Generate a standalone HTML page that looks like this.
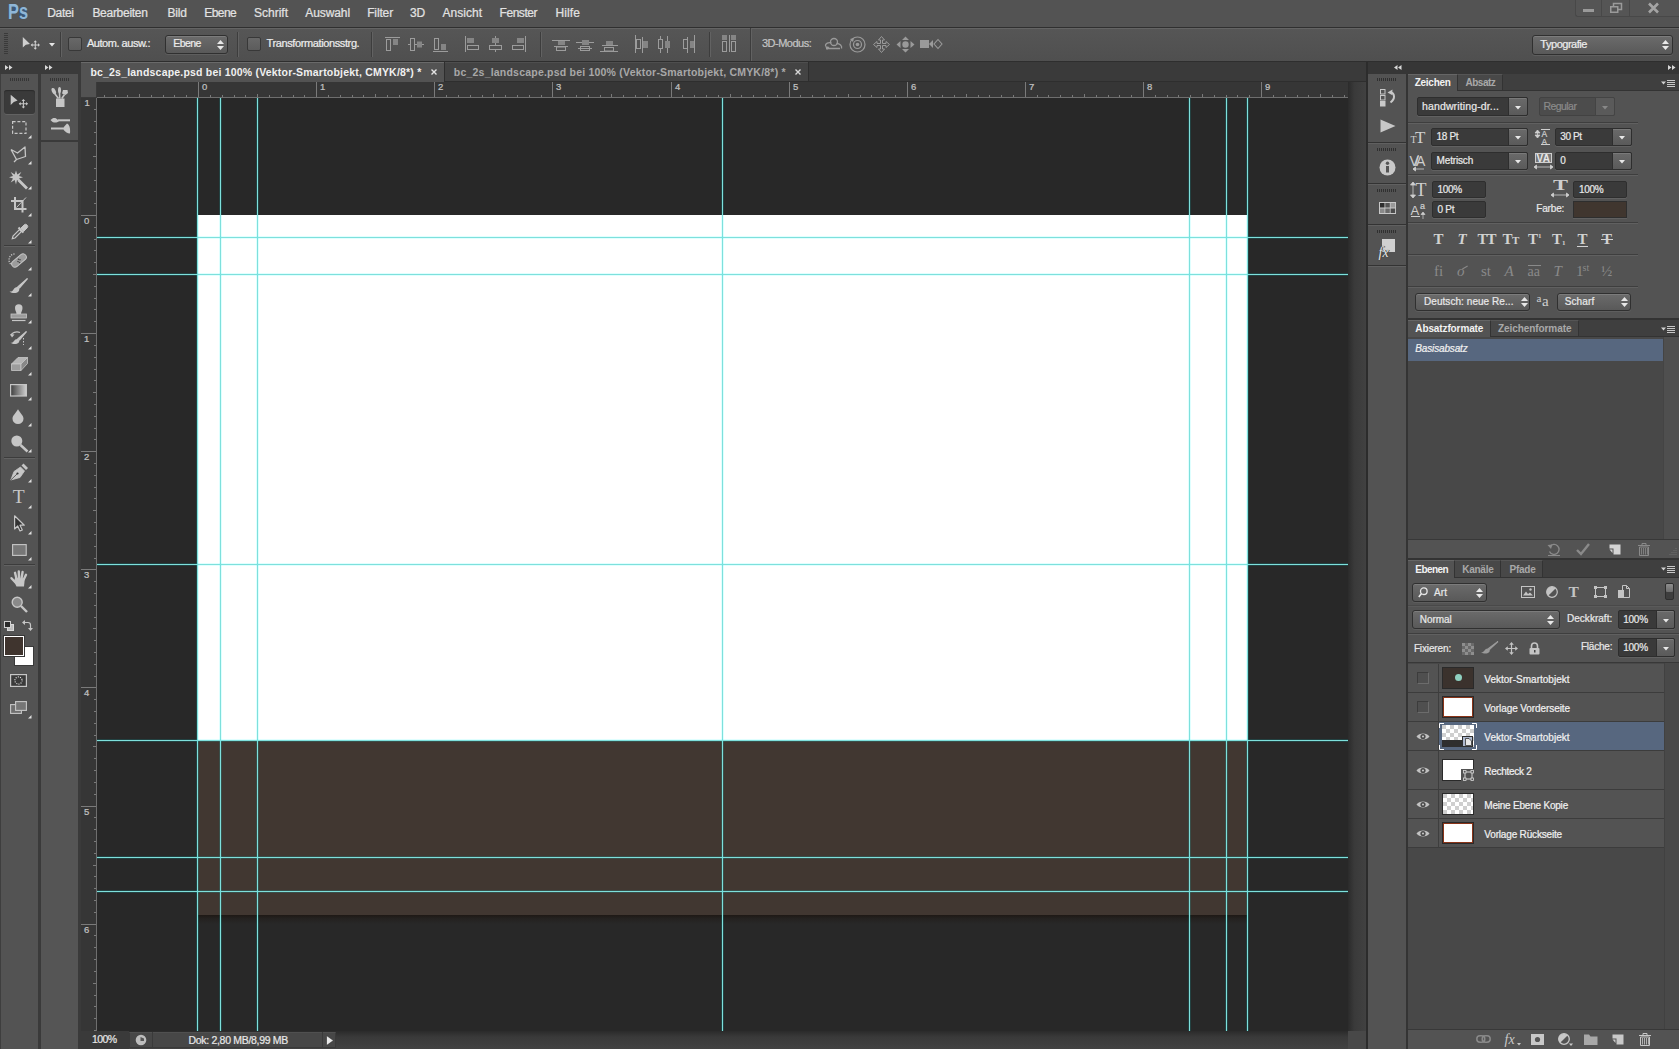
<!DOCTYPE html>
<html><head><meta charset="utf-8">
<style>
*{box-sizing:border-box;margin:0;padding:0}
html,body{width:1679px;height:1049px;overflow:hidden;background:#535353}
body{font-family:"Liberation Sans",sans-serif;font-size:11px;color:#e6e6e6;position:relative}
.a{position:absolute}
.t{position:absolute;white-space:nowrap;line-height:1}
svg{position:absolute;overflow:visible}
/* ---------- top bars ---------- */
#menubar{left:0;top:0;width:1679px;height:27px;background:#535353}
#menuline{left:0;top:27px;width:1679px;height:1px;background:#303030}
#optbar{left:0;top:28px;width:1679px;height:34px;background:linear-gradient(#565656,#4f4f4f)}
#optline{left:0;top:61px;width:1679px;height:1px;background:#2e2e2e}
.m{top:7px;font-size:12px;color:#e4e4e4}
/* ---------- left tools ---------- */
#lhead{left:0;top:62px;width:81px;height:12px;background:#3a3a3a}
#tb1{left:0;top:74px;width:38px;height:975px;background:#535353}
#tbgap{left:38px;top:74px;width:3px;height:975px;background:#3a3a3a}
#tb2{left:41px;top:74px;width:37px;height:975px;background:#555555}
#tb2top{left:41px;top:74px;width:37px;height:66px;background:#535353}
#tbgap2{left:78px;top:62px;width:3px;height:987px;background:#3a3a3a}
/* ---------- document ---------- */
#tabbar{left:81px;top:62px;width:1285px;height:20px;background:#3a3a3a}
#tab1{left:81px;top:62px;width:365px;height:20px;background:#535353}
#hruler{left:81px;top:82px;width:1267px;height:16px;background:#363636}
#vruler{left:81px;top:98px;width:16px;height:933px;background:#363636}
#corner{left:81px;top:82px;width:16px;height:16px;background:#535353}
#canvas{left:97px;top:98px;width:1251px;height:933px;background:#282828;overflow:hidden}
#white{left:101px;top:117px;width:1049px;height:526px;background:#fff}
#brown{left:101px;top:643px;width:1049px;height:174px;background:#413731}
#bshadow{left:101px;top:817px;width:1049px;height:9px;background:linear-gradient(rgba(24,14,8,.6),rgba(24,14,8,.25) 40%,rgba(24,14,8,0))}
.gv{position:absolute;top:0;width:1px;height:933px;background:#7ee0dc;box-shadow:0 0 0 1px rgba(0,255,255,.12)}
.gh{position:absolute;left:0;height:1px;width:1252px;background:#7ee0dc;box-shadow:0 0 0 1px rgba(0,255,255,.12)}
#vscroll{left:1348px;top:82px;width:18px;height:949px;background:linear-gradient(90deg,#2b2b2b 0,#3a3a3a 35%,#414141 100%)}
#hscroll{left:81px;top:1031px;width:1285px;height:18px;background:linear-gradient(#2b2b2b 0,#3a3a3a 35%,#424242 100%)}
#docline{left:1366px;top:62px;width:2px;height:987px;background:#2c2c2c}
/* ---------- right dock ---------- */
#rhead{left:1368px;top:62px;width:311px;height:12px;background:#363636}
#icol{left:1368px;top:74px;width:38px;height:975px;background:#535353}
#igap{left:1406px;top:74px;width:2px;height:975px;background:#343434}
#panels{left:1408px;top:74px;width:271px;height:975px;background:#535353}
</style></head>
<body>
<div id="menubar" class="a"></div>
<div id="menuline" class="a"></div>
<div id="optbar" class="a"></div>
<div id="optline" class="a"></div>
<span class="t" style="left:47.3px;top:6.84px;font-size:12px;color:#e2e2e2;-webkit-text-stroke:.22px;letter-spacing:-0.343px;">Datei</span>
<span class="t" style="left:92.4px;top:6.84px;font-size:12px;color:#e2e2e2;-webkit-text-stroke:.22px;letter-spacing:-0.285px;">Bearbeiten</span>
<span class="t" style="left:167.4px;top:6.84px;font-size:12px;color:#e2e2e2;-webkit-text-stroke:.22px;letter-spacing:-0.179px;">Bild</span>
<span class="t" style="left:204.2px;top:6.84px;font-size:12px;color:#e2e2e2;-webkit-text-stroke:.22px;letter-spacing:-0.541px;">Ebene</span>
<span class="t" style="left:254px;top:6.84px;font-size:12px;color:#e2e2e2;-webkit-text-stroke:.22px;letter-spacing:-0.002px;">Schrift</span>
<span class="t" style="left:305.3px;top:6.84px;font-size:12px;color:#e2e2e2;-webkit-text-stroke:.22px;letter-spacing:-0.094px;">Auswahl</span>
<span class="t" style="left:367.2px;top:6.84px;font-size:12px;color:#e2e2e2;-webkit-text-stroke:.22px;letter-spacing:-0.145px;">Filter</span>
<span class="t" style="left:410px;top:6.84px;font-size:12px;color:#e2e2e2;-webkit-text-stroke:.22px;letter-spacing:-0.072px;">3D</span>
<span class="t" style="left:442.5px;top:6.84px;font-size:12px;color:#e2e2e2;-webkit-text-stroke:.22px;letter-spacing:0.020px;">Ansicht</span>
<span class="t" style="left:499.6px;top:6.84px;font-size:12px;color:#e2e2e2;-webkit-text-stroke:.22px;letter-spacing:-0.470px;">Fenster</span>
<span class="t" style="left:555.5px;top:6.84px;font-size:12px;color:#e2e2e2;-webkit-text-stroke:.22px;letter-spacing:0.077px;">Hilfe</span>
<div class="a" style="left:10px;top:5px;width:7px;height:8px;background:#3d5878;border-radius:1px"></div>
<div class="a" style="left:19px;top:8px;width:8px;height:11px;background:#3a5676;border-radius:2px"></div>
<span class="t" style="left:7.5px;top:-0.00px;font-size:22.8px;color:#8fb6d6;font-weight:bold;transform:scaleX(0.72);transform-origin:0 0;text-shadow:0 0 1px #3a5a7a;">Ps</span>
<div class="a" style="left:0px;top:28px;width:1679px;height:1px;background:#646464"></div>
<div class="a" style="left:4px;top:33px;width:4px;height:22px;background:repeating-linear-gradient(#3a3a3a 0 1px,transparent 1px 2px)"></div>
<svg style="left:22px;top:36px;" width="19" height="15" viewBox="0 0 19 15"><path d="M0.800 1 V11.500 L3.800 8.800 L8 8 Z" fill="#cfcfcf"/><path d="M13.300 5.500 v7 M9.800 9 h7" stroke="#d0d0d0" stroke-width="1" fill="none"/><path d="M13.300 4.300 l-1.700 2 h3.400z M13.300 13.700 l-1.700 -2 h3.400z M8.600 9 l2 -1.700 v3.400z M18 9 l-2 -1.700 v3.400z" fill="#d0d0d0"/></svg>
<svg style="left:49px;top:43px;" width="6" height="4" viewBox="0 0 6 4"><path d="M0 0 L6 0 L3 3.5Z" fill="#e6e6e6"/></svg>
<div class="a" style="left:60px;top:32px;width:1px;height:25px;background:#3d3d3d"></div>
<div class="a" style="left:61px;top:32px;width:1px;height:25px;background:#626262"></div>
<div class="a" style="left:68px;top:37px;width:14px;height:14px;border:1px solid #383838;border-radius:2px;background:linear-gradient(#686868,#5c5c5c)"></div>
<span class="t" style="left:87px;top:37.99px;font-size:11px;color:#ececec;-webkit-text-stroke:.22px;letter-spacing:-0.469px;">Autom. ausw.:</span>
<div class="a" style="left:165px;top:35px;width:63px;height:19px;border:1px solid #303030;border-radius:3px;background:linear-gradient(#6b6b6b,#595959);box-shadow:inset 0 1px 0 #7c7c7c,0 1px 0 #5e5e5e"></div>
<span class="t" style="left:173.3px;top:38.41px;font-size:10.5px;color:#ececec;-webkit-text-stroke:.22px;letter-spacing:-0.575px;">Ebene</span>
<svg style="left:217px;top:40px;" width="7" height="10" viewBox="0 0 7 10"><path d="M3.5 0 L7 4 L0 4Z M0 6 L7 6 L3.5 10Z" fill="#e8e8e8"/></svg>
<div class="a" style="left:237px;top:32px;width:1px;height:25px;background:#3d3d3d"></div>
<div class="a" style="left:238px;top:32px;width:1px;height:25px;background:#626262"></div>
<div class="a" style="left:247px;top:37px;width:14px;height:14px;border:1px solid #383838;border-radius:2px;background:linear-gradient(#686868,#5c5c5c)"></div>
<span class="t" style="left:266.6px;top:37.99px;font-size:11px;color:#ececec;-webkit-text-stroke:.22px;letter-spacing:-0.388px;">Transformationsstrg.</span>
<div class="a" style="left:371px;top:32px;width:1px;height:25px;background:#3d3d3d"></div>
<div class="a" style="left:372px;top:32px;width:1px;height:25px;background:#626262"></div>
<svg style="left:385px;top:36px;" width="16" height="16" viewBox="0 0 16 16"><path d="M0 1.5h15" stroke="#9c9c9c"/><rect x="1.5" y="3.5" width="4" height="11" fill="none" stroke="#9c9c9c"/><rect x="8" y="3" width="5" height="6" fill="#858585"/></svg>
<svg style="left:408px;top:36px;" width="16" height="16" viewBox="0 0 16 16"><path d="M0 8.5h16" stroke="#9c9c9c"/><rect x="2.5" y="2.5" width="4" height="12" fill="#535353" stroke="#9c9c9c"/><rect x="9" y="5.5" width="5" height="6" fill="#858585"/></svg>
<svg style="left:433px;top:36px;" width="16" height="16" viewBox="0 0 16 16"><path d="M0 15.5h15" stroke="#9c9c9c"/><rect x="1.5" y="2.5" width="4" height="11" fill="none" stroke="#9c9c9c"/><rect x="8" y="8" width="5" height="6" fill="#858585"/></svg>
<svg style="left:464px;top:36px;" width="16" height="16" viewBox="0 0 16 16"><path d="M1.5 0v16" stroke="#9c9c9c"/><rect x="3" y="2" width="7" height="5" fill="#858585"/><rect x="3.5" y="9.5" width="11" height="4" fill="none" stroke="#9c9c9c"/></svg>
<svg style="left:488px;top:36px;" width="16" height="16" viewBox="0 0 16 16"><path d="M7.5 0v16" stroke="#9c9c9c"/><rect x="4" y="2" width="7" height="5" fill="#858585"/><rect x="1.5" y="9.5" width="12" height="4" fill="#535353" stroke="#9c9c9c"/></svg>
<svg style="left:512px;top:36px;" width="16" height="16" viewBox="0 0 16 16"><path d="M13.5 0v16" stroke="#9c9c9c"/><rect x="5" y="2" width="7" height="5" fill="#858585"/><rect x="0.5" y="9.5" width="11" height="4" fill="none" stroke="#9c9c9c"/></svg>
<div class="a" style="left:540px;top:32px;width:1px;height:25px;background:#3d3d3d"></div>
<div class="a" style="left:541px;top:32px;width:1px;height:25px;background:#626262"></div>
<svg style="left:552px;top:36px;" width="18" height="16" viewBox="0 0 18 16"><path d="M0 4.5h18 M2 10.5h14" stroke="#9c9c9c"/><rect x="6" y="5" width="7" height="4" fill="#858585"/><rect x="4.500" y="11" width="9" height="3.5" fill="none" stroke="#9c9c9c"/></svg>
<svg style="left:576px;top:36px;" width="18" height="16" viewBox="0 0 18 16"><path d="M0 6.500h18 M2 12.500h14" stroke="#9c9c9c"/><rect x="6" y="4" width="7" height="5" fill="#858585"/><rect x="4.500" y="10.500" width="9" height="4" fill="none" stroke="#9c9c9c"/></svg>
<svg style="left:600px;top:36px;" width="18" height="16" viewBox="0 0 18 16"><path d="M2 9.5h16 M0 15.500h18" stroke="#9c9c9c"/><rect x="6" y="5" width="7" height="4" fill="#858585"/><rect x="4.500" y="11.500" width="9" height="3.500" fill="none" stroke="#9c9c9c"/></svg>
<svg style="left:634px;top:35px;" width="16" height="18" viewBox="0 0 16 18"><path d="M1.500 0v18 M8.500 2v16" stroke="#9c9c9c"/><rect x="2.500" y="4.500" width="4" height="9" fill="none" stroke="#9c9c9c"/><rect x="9" y="6" width="5" height="7" fill="#858585"/></svg>
<svg style="left:656px;top:35px;" width="16" height="18" viewBox="0 0 16 18"><path d="M4.500 1v17 M11.500 1v17" stroke="#9c9c9c"/><rect x="2.500" y="4.500" width="4" height="9" fill="#535353" stroke="#9c9c9c"/><rect x="9" y="6" width="5" height="7" fill="#858585"/></svg>
<svg style="left:682px;top:35px;" width="16" height="18" viewBox="0 0 16 18"><path d="M5.500 2v16 M12.500 0v18" stroke="#9c9c9c"/><rect x="1.500" y="4.500" width="4" height="9" fill="none" stroke="#9c9c9c"/><rect x="8" y="6" width="4" height="7" fill="#858585"/></svg>
<div class="a" style="left:709px;top:32px;width:1px;height:25px;background:#3d3d3d"></div>
<div class="a" style="left:710px;top:32px;width:1px;height:25px;background:#626262"></div>
<svg style="left:721px;top:35px;" width="16" height="18" viewBox="0 0 16 18"><rect x="1" y="0" width="5" height="5" fill="#858585"/><rect x="10" y="0" width="5" height="5" fill="#858585"/><rect x="1.500" y="6.500" width="4" height="10" fill="none" stroke="#9c9c9c"/><rect x="10.500" y="6.500" width="4" height="10" fill="none" stroke="#9c9c9c"/><path d="M8.500 0v17" stroke="#9c9c9c"/></svg>
<div class="a" style="left:750px;top:28px;width:1px;height:33px;background:#3d3d3d"></div>
<div class="a" style="left:751px;top:28px;width:1px;height:33px;background:#626262"></div>
<span class="t" style="left:762px;top:37.89px;font-size:11px;color:#c4c4c4;-webkit-text-stroke:.22px;letter-spacing:-0.511px;">3D-Modus:</span>
<svg style="left:824px;top:37px;" width="19" height="15" viewBox="0 0 19 15"><circle cx="10" cy="5" r="3.500" fill="none" stroke="#9a9a9a" stroke-width="1.300"/><path d="M1.500 9 a4 3 0 0 1 6 -3 M12.500 6.500 a5 4 0 0 1 5 5 M2 11.500 h14" fill="none" stroke="#9a9a9a" stroke-width="1.300"/><path d="M1 9 l2 4 l2.500-3z" fill="#9a9a9a"/></svg>
<svg style="left:849px;top:36px;" width="17" height="17" viewBox="0 0 17 17"><circle cx="8.500" cy="8.500" r="7.500" fill="none" stroke="#9a9a9a" stroke-width="1.200"/><circle cx="8.500" cy="8.500" r="4" fill="none" stroke="#9a9a9a" stroke-width="1.200"/><circle cx="8.500" cy="8.500" r="1.800" fill="#9a9a9a"/><path d="M1 3 l4 -1 l-1 4z" fill="#9a9a9a"/></svg>
<svg style="left:873px;top:36px;" width="17" height="17" viewBox="0 0 17 17"><path d="M8.500 0.500 L5.500 4 H7.500 V7.500 H4 V5.500 L0.500 8.500 L4 11.500 V9.500 H7.500 V13 H5.500 L8.500 16.500 L11.500 13 H9.500 V9.500 H13 V11.500 L16.500 8.500 L13 5.500 V7.500 H9.500 V4 H11.500Z" fill="none" stroke="#9a9a9a" stroke-width="1"/></svg>
<svg style="left:896px;top:36px;" width="19" height="17" viewBox="0 0 19 17"><circle cx="9.500" cy="8.500" r="3.200" fill="#9a9a9a"/><path d="M9.500 0.500 l3.500 3.500 h-7z M9.500 16.500 l3.500 -3.500 h-7z M0.500 8.500 l4 -3.500 v7z M18.500 8.500 l-4 -3.500 v7z" fill="#9a9a9a"/></svg>
<svg style="left:920px;top:39px;" width="23" height="11" viewBox="0 0 23 11"><rect x="0" y="1" width="9" height="8" fill="#9a9a9a"/><path d="M9 5 l4 -4 v8z" fill="#9a9a9a"/><path d="M18 0.500 l4 4.500 l-4 4.500 l-4 -4.500z" fill="none" stroke="#9a9a9a" stroke-width="1.100"/></svg>
<div class="a" style="left:1532px;top:35px;width:141px;height:20px;border:1px solid #303030;border-radius:3px;background:linear-gradient(#6b6b6b,#595959);box-shadow:inset 0 1px 0 #7c7c7c,0 1px 0 #5e5e5e"></div>
<span class="t" style="left:1540.3px;top:38.69px;font-size:11px;color:#ececec;-webkit-text-stroke:.22px;letter-spacing:-0.467px;">Typografie</span>
<svg style="left:1662px;top:40px;" width="7" height="10" viewBox="0 0 7 10"><path d="M3.5 0 L7 4 L0 4Z M0 6 L7 6 L3.5 10Z" fill="#e8e8e8"/></svg>
<div class="a" style="left:1575px;top:0px;width:104px;height:17px;border:1px solid #484848;border-top:none;border-right:none;border-radius:0 0 0 3px;background:#555"></div>
<div class="a" style="left:1601px;top:0px;width:1px;height:16px;background:#484848"></div>
<div class="a" style="left:1629px;top:0px;width:1px;height:16px;background:#484848"></div>
<div class="a" style="left:1583px;top:9px;width:11px;height:3px;background:#9a9a9a"></div>
<svg style="left:1610px;top:3px;" width="12" height="10" viewBox="0 0 12 10"><rect x="3.500" y="0.500" width="8" height="6" fill="none" stroke="#9a9a9a" stroke-width="1.500"/><rect x="0.750" y="3.750" width="7" height="5.500" fill="#555" stroke="#9a9a9a" stroke-width="1.500"/></svg>
<svg style="left:1648px;top:3px;" width="11" height="10" viewBox="0 0 11 10"><path d="M1 0.500 L10 9.500 M10 0.500 L1 9.500" stroke="#a4a4a4" stroke-width="2.600"/></svg>
<div id="lhead" class="a"></div>
<div id="tb1" class="a"></div>
<div id="tbgap" class="a"></div>
<div id="tb2" class="a"></div>
<div id="tb2top" class="a"></div>
<div id="tbgap2" class="a"></div>
<svg style="left:4.5px;top:65px;" width="8" height="5" viewBox="0 0 8 5"><path d="M0 0 L3.500 2.500 L0 5Z M4 0 L7.500 2.500 L4 5Z" fill="#d8d8d8"/></svg>
<svg style="left:44.8px;top:65px;" width="8" height="5" viewBox="0 0 8 5"><path d="M0 0 L3.500 2.500 L0 5Z M4 0 L7.500 2.500 L4 5Z" fill="#d8d8d8"/></svg>
<div class="a" style="left:0px;top:74px;width:1px;height:975px;background:#3e3e3e"></div>
<div class="a" style="left:10px;top:78px;width:20px;height:3px;background:repeating-linear-gradient(90deg,#353535 0 1px,transparent 1px 2px)"></div>
<div class="a" style="left:50px;top:78px;width:20px;height:3px;background:repeating-linear-gradient(90deg,#353535 0 1px,transparent 1px 2px)"></div>
<div class="a" style="left:4px;top:90px;width:31px;height:24px;background:#3a3a3a;border-radius:3px;box-shadow:inset 0 1px 1px #2c2c2c,0 1px 0 #626262"></div>
<svg style="left:10px;top:94px;" width="22" height="16" viewBox="0 0 22 16"><path d="M0.700 0.700 V11 L3.800 8 L7.600 6.500Z" fill="#c6c6c6"/><path d="M13.400 6 v7.400 M9.700 9.700 h7.400" stroke="#c6c6c6" stroke-width="1.100"/><path d="M13.400 5 l-1.800 2 h3.600z M13.400 14.400 l-1.800 -2 h3.600z M8.700 9.700 l2 -1.800 v3.600z M18.100 9.700 l-2 -1.800 v3.600z" fill="#c6c6c6"/></svg>
<svg style="left:12px;top:121px;" width="15" height="13" viewBox="0 0 15 13"><rect x="0.600" y="0.600" width="13.400" height="11.800" fill="none" stroke="#c6c6c6" stroke-width="1.200" stroke-dasharray="3 1.800"/></svg>
<svg style="left:28px;top:135px;" width="4" height="4" viewBox="0 0 4 4"><path d="M3.500 0 V3.500 H0Z" fill="#e0e0e0"/></svg>
<svg style="left:10px;top:146px;" width="17" height="17" viewBox="0 0 17 17"><path d="M1 3.500 L7.500 7 L15 1 L15.500 10.500 L6.500 13.500 L4 16 M1 3.500 L6.500 13.500" fill="none" stroke="#c6c6c6" stroke-width="1.300" stroke-linejoin="round"/></svg>
<svg style="left:28px;top:161px;" width="4" height="4" viewBox="0 0 4 4"><path d="M3.500 0 V3.500 H0Z" fill="#e0e0e0"/></svg>
<svg style="left:9px;top:170px;" width="20" height="20" viewBox="0 0 20 20"><path d="M7 0.500 l1.300 4 l4 -2.500 l-2.300 4 l4 1.300 l-4 1.300 l2 3.800 l-4 -2.300 l-1 4.300 l-1.300 -4.300 l-4 2.300 l2.300 -4 l-4 -1.100 l4 -1.300 l-2.300 -4 l4 2.500z" fill="#c6c6c6"/><path d="M9.500 10 L18 18.500" stroke="#c6c6c6" stroke-width="2.800"/></svg>
<svg style="left:28px;top:186px;" width="4" height="4" viewBox="0 0 4 4"><path d="M3.500 0 V3.500 H0Z" fill="#e0e0e0"/></svg>
<svg style="left:11px;top:197px;" width="16" height="16" viewBox="0 0 16 16"><path d="M4 0 V12 H15.500 M0 4 H11.500 V15.500" fill="none" stroke="#c6c6c6" stroke-width="2"/><path d="M5.500 10.500 L15 0.500" stroke="#c6c6c6" stroke-width="1"/></svg>
<svg style="left:28px;top:213px;" width="4" height="4" viewBox="0 0 4 4"><path d="M3.500 0 V3.500 H0Z" fill="#e0e0e0"/></svg>
<svg style="left:11px;top:223px;" width="17" height="17" viewBox="0 0 17 17"><path d="M1.300 15.700 L2 13 L8.500 6.500 L10.500 8.500 L4 15Z" fill="none" stroke="#c6c6c6" stroke-width="1.200"/><path d="M7.500 4.500 L12.500 9.500" stroke="#c6c6c6" stroke-width="2.200"/><path d="M10 5 L13 2 a2.100 2.100 0 0 1 3 3 L13 8Z" fill="#c6c6c6" stroke="#c6c6c6" stroke-width="1"/></svg>
<svg style="left:28px;top:240px;" width="4" height="4" viewBox="0 0 4 4"><path d="M3.500 0 V3.500 H0Z" fill="#e0e0e0"/></svg>
<div class="a" style="left:4px;top:245px;width:31px;height:1px;background:#3c3c3c"></div>
<div class="a" style="left:4px;top:246px;width:31px;height:1px;background:#626262"></div>
<svg style="left:8px;top:252px;" width="21" height="18" viewBox="0 0 21 18"><path d="M6.500 2 a5.500 6 0 0 0 -3 11" fill="none" stroke="#c6c6c6" stroke-width="1.300" stroke-dasharray="1.200 1.200"/><rect x="2.500" y="5.200" width="17" height="6.600" rx="3.300" fill="#9c9c9c" stroke="#c6c6c6" stroke-width="1" transform="rotate(-40 11 8.500)"/><circle cx="10" cy="9.500" r=".8" fill="#444"/><circle cx="12" cy="7.700" r=".8" fill="#444"/><circle cx="11.500" cy="10.500" r=".8" fill="#444"/><circle cx="10.500" cy="7.300" r=".8" fill="#444"/></svg>
<svg style="left:28px;top:267px;" width="4" height="4" viewBox="0 0 4 4"><path d="M3.500 0 V3.500 H0Z" fill="#e0e0e0"/></svg>
<svg style="left:9px;top:278px;" width="20" height="16" viewBox="0 0 20 16"><path d="M18.500 0.500 L10.500 10 L9 8.800Z" fill="#c6c6c6" stroke="#c6c6c6" stroke-width="1.200"/><path d="M9.500 9.500 c-1.500 -1 -4 0 -5 2 c-1 2 -3 2.300 -4 2 c2.500 2 7 2 9 0 c1.200 -1.300 1 -3 0 -4z" fill="#c6c6c6"/></svg>
<svg style="left:28px;top:293px;" width="4" height="4" viewBox="0 0 4 4"><path d="M3.500 0 V3.500 H0Z" fill="#e0e0e0"/></svg>
<svg style="left:11px;top:304px;" width="16" height="18" viewBox="0 0 16 18"><path d="M5.500 10 c0 -2 -1.500 -3.500 -1.500 -6 a3.500 3.500 0 0 1 7.500 0 c0 2.500 -1.500 4 -1.500 6z" fill="#c6c6c6"/><rect x="0" y="10" width="15.500" height="4" fill="#9c9c9c" stroke="#c6c6c6" stroke-width=".8"/><path d="M1 16.500 h13.500" stroke="#c6c6c6" stroke-width="1.200"/></svg>
<svg style="left:28px;top:320px;" width="4" height="4" viewBox="0 0 4 4"><path d="M3.500 0 V3.500 H0Z" fill="#e0e0e0"/></svg>
<svg style="left:10px;top:331px;" width="18" height="15" viewBox="0 0 18 15"><path d="M16.500 0.500 L9.500 9 L8 7.800Z" fill="#c6c6c6" stroke="#c6c6c6" stroke-width="1.200"/><path d="M8.500 8.500 c-1.500 -1 -3.500 0 -4.500 1.500 c-1 1.500 -2.500 2 -3.500 1.800 c2.500 1.800 6.500 1.700 8 0 c1 -1 1 -2.300 0 -3.300z" fill="#c6c6c6"/><path d="M1 4.500 a6 4 0 0 1 9 -3" fill="none" stroke="#c6c6c6" stroke-width="1.200"/><path d="M0 3 l2 3.500 l2.500 -3z" fill="#c6c6c6"/><path d="M13.500 7 v7" stroke="#c6c6c6" stroke-width="1" stroke-dasharray="1.500 1.500"/></svg>
<svg style="left:28px;top:346px;" width="4" height="4" viewBox="0 0 4 4"><path d="M3.500 0 V3.500 H0Z" fill="#e0e0e0"/></svg>
<svg style="left:11px;top:357px;" width="18" height="15" viewBox="0 0 18 15"><path d="M7 0.500 H16.500 L10 7 H0.500Z" fill="#b4b4b4" stroke="#c6c6c6" stroke-width=".8"/><path d="M0.500 7 H10 V13.500 H0.500Z" fill="#9c9c9c" stroke="#c6c6c6" stroke-width=".8"/><path d="M10 7 L16.500 0.500 V6.500 L10 13.500Z" fill="#888" stroke="#c6c6c6" stroke-width=".8"/></svg>
<svg style="left:28px;top:372px;" width="4" height="4" viewBox="0 0 4 4"><path d="M3.500 0 V3.500 H0Z" fill="#e0e0e0"/></svg>
<svg style="left:10px;top:384px;" width="17" height="13" viewBox="0 0 17 13"><defs><linearGradient id="gtool"><stop offset="0" stop-color="#3e3e3e"/><stop offset="1" stop-color="#cfcfcf"/></linearGradient></defs><rect x="0.600" y="0.600" width="15.800" height="11.400" fill="url(#gtool)" stroke="#c6c6c6" stroke-width="1.200"/></svg>
<svg style="left:28px;top:397px;" width="4" height="4" viewBox="0 0 4 4"><path d="M3.500 0 V3.500 H0Z" fill="#e0e0e0"/></svg>
<svg style="left:12px;top:409px;" width="13" height="15" viewBox="0 0 13 15"><path d="M6 0.300 C8 4 11.500 6.500 11.500 9.700 a5.500 5.300 0 0 1 -11 0 C0.500 6.500 4 4 6 0.300Z" fill="#c6c6c6"/></svg>
<svg style="left:28px;top:423px;" width="4" height="4" viewBox="0 0 4 4"><path d="M3.500 0 V3.500 H0Z" fill="#e0e0e0"/></svg>
<svg style="left:11px;top:435px;" width="18" height="18" viewBox="0 0 18 18"><circle cx="5.800" cy="6" r="5.500" fill="#c6c6c6"/><path d="M9.500 10 L16.500 16.500" stroke="#c6c6c6" stroke-width="2.400"/></svg>
<svg style="left:28px;top:449px;" width="4" height="4" viewBox="0 0 4 4"><path d="M3.500 0 V3.500 H0Z" fill="#e0e0e0"/></svg>
<div class="a" style="left:4px;top:457px;width:31px;height:1px;background:#3c3c3c"></div>
<div class="a" style="left:4px;top:458px;width:31px;height:1px;background:#626262"></div>
<svg style="left:10px;top:462px;" width="19" height="19" viewBox="0 0 19 19"><path d="M0.800 18 L4 9.500 L10.500 5 L14.500 9 L10 15.500Z" fill="#c6c6c6" stroke="#c6c6c6" stroke-width=".8"/><path d="M11.500 3.500 L16 8 L18 6 L13.500 1.500Z" fill="#c6c6c6"/><circle cx="7.500" cy="11.500" r="1.100" fill="#333"/><path d="M1 17.800 L7 12" stroke="#444" stroke-width=".8"/></svg>
<svg style="left:28px;top:479px;" width="4" height="4" viewBox="0 0 4 4"><path d="M3.500 0 V3.500 H0Z" fill="#e0e0e0"/></svg>
<span class="t" style="left:12.8px;top:487.29px;font-size:19.5px;color:#c6c6c6;font-family:'Liberation Serif',serif;">T</span>
<svg style="left:28px;top:505px;" width="4" height="4" viewBox="0 0 4 4"><path d="M3.500 0 V3.500 H0Z" fill="#e0e0e0"/></svg>
<svg style="left:14px;top:515px;" width="12" height="17" viewBox="0 0 12 17"><path d="M0.600 0.800 V14 L3.700 11 L6 16 L8.300 15 L6 10.200 L10.300 10.200Z" fill="#333" stroke="#c6c6c6" stroke-width="1.200" stroke-linejoin="round"/></svg>
<svg style="left:28px;top:531px;" width="4" height="4" viewBox="0 0 4 4"><path d="M3.500 0 V3.500 H0Z" fill="#e0e0e0"/></svg>
<svg style="left:12px;top:544px;" width="15" height="12" viewBox="0 0 15 12"><rect x="0.600" y="0.600" width="13.600" height="10.800" fill="#777" stroke="#c6c6c6" stroke-width="1.100"/></svg>
<svg style="left:28px;top:557px;" width="4" height="4" viewBox="0 0 4 4"><path d="M3.500 0 V3.500 H0Z" fill="#e0e0e0"/></svg>
<div class="a" style="left:4px;top:564px;width:31px;height:1px;background:#3c3c3c"></div>
<div class="a" style="left:4px;top:565px;width:31px;height:1px;background:#626262"></div>
<svg style="left:10px;top:570px;" width="18" height="17" viewBox="0 0 18 17"><path d="M6.500 9 L5 2.800 M9 8.500 L8.800 1.500 M11.500 8.500 L12.600 2 M13.700 9.500 L16 4.800 M5.500 12.500 L1.500 8.200" stroke="#c6c6c6" stroke-width="2.400" stroke-linecap="round" fill="none"/><path d="M5 8 L14.800 8.500 L14 16.500 L6.500 16.500 L4 11.500Z" fill="#c6c6c6"/></svg>
<svg style="left:28px;top:585px;" width="4" height="4" viewBox="0 0 4 4"><path d="M3.500 0 V3.500 H0Z" fill="#e0e0e0"/></svg>
<svg style="left:11px;top:596px;" width="18" height="18" viewBox="0 0 18 18"><circle cx="6.200" cy="6.200" r="5" fill="#8a8a8a" stroke="#c6c6c6" stroke-width="1.400"/><path d="M10 10 L16 16" stroke="#c6c6c6" stroke-width="2.400"/></svg>
<div class="a" style="left:7px;top:624px;width:7px;height:7px;background:#bdbdbd;border:1px solid #d8d8d8"></div>
<div class="a" style="left:4px;top:621px;width:7px;height:7px;background:#2a2a2a;border:1px solid #d0d0d0"></div>
<svg style="left:22px;top:620px;" width="11" height="11" viewBox="0 0 11 11"><path d="M2.500 2.500 H6 a2.500 2.500 0 0 1 2.500 2.500 V8.500" fill="none" stroke="#c6c6c6" stroke-width="1.200"/><path d="M0 2.500 L3 0 V5Z M8.500 11 L6 8 H11Z" fill="#c6c6c6"/></svg>
<div class="a" style="left:15px;top:647px;width:18px;height:18px;background:#fff;border:1px solid #3a3a3a;box-sizing:content-box;left:14px;top:646px"></div>
<div class="a" style="left:4px;top:636px;width:20px;height:20px;background:#3f342e;border:1px solid #fff;outline:1px solid #383838"></div>
<svg style="left:10px;top:674px;" width="17" height="13" viewBox="0 0 17 13"><rect x="0.600" y="0.600" width="15.800" height="11.800" fill="#3a3a3a" stroke="#c6c6c6" stroke-width="1.200"/><circle cx="8.500" cy="6.500" r="3.600" fill="none" stroke="#e8e8e8" stroke-width="1.100" stroke-dasharray="1 1.260"/></svg>
<svg style="left:10px;top:701px;" width="17" height="13" viewBox="0 0 17 13"><rect x="0.600" y="3.600" width="10.800" height="8.800" fill="#6e6e6e" stroke="#c6c6c6" stroke-width="1.100"/><rect x="5.600" y="0.600" width="10.800" height="8.800" fill="#767676" stroke="#c6c6c6" stroke-width="1.100"/></svg>
<svg style="left:28px;top:715px;" width="4" height="4" viewBox="0 0 4 4"><path d="M3.500 0 V3.500 H0Z" fill="#e0e0e0"/></svg>
<svg style="left:52px;top:87px;" width="17" height="20" viewBox="0 0 17 20"><rect x="4" y="11.500" width="8.500" height="8.500" fill="#c6c6c6"/><ellipse cx="1.800" cy="4.200" rx="1.900" ry="3.400" transform="rotate(-25 1.800 4.200)" fill="#c6c6c6"/><path d="M3 7 L6.500 11.500" stroke="#c6c6c6" stroke-width="1.600"/><ellipse cx="7.500" cy="3.200" rx="1.500" ry="3.200" fill="#c6c6c6"/><path d="M7.500 6 L7.800 11.500" stroke="#c6c6c6" stroke-width="1.600"/><path d="M10 6.500 L11 3 H15.500 L16 6 L13.500 8Z" fill="#c6c6c6"/><path d="M12.500 7.500 L9.800 11.500" stroke="#c6c6c6" stroke-width="1.600"/></svg>
<svg style="left:50px;top:117px;" width="21" height="17" viewBox="0 0 21 17"><path d="M0.500 3 C3 0 6 0.500 7.500 2.500 L9 4 C6.500 6.500 2.500 6 0.500 3Z" fill="#c6c6c6"/><path d="M8 3.300 H20" stroke="#c6c6c6" stroke-width="2"/><path d="M1 11.500 H13" stroke="#c6c6c6" stroke-width="2"/><path d="M12.500 11.500 L17 6.500 C19 7.500 20.500 10 20 16.500 C17.500 16.500 14.500 14.500 12.500 11.500Z" fill="#c6c6c6"/></svg>
<div class="a" style="left:41px;top:140px;width:37px;height:2px;background:#3a3a3a"></div>
<div id="tabbar" class="a"></div>
<div id="tab1" class="a"></div>
<div class="a" style="left:81px;top:62px;width:364px;height:1px;background:#6a6a6a"></div>
<div class="a" style="left:444px;top:62px;width:1px;height:20px;background:#2e2e2e"></div>
<div class="a" style="left:445px;top:63px;width:364px;height:18px;background:#434343"></div>
<div class="a" style="left:445px;top:62px;width:364px;height:1px;background:#4e4e4e"></div>
<div class="a" style="left:808px;top:62px;width:1px;height:20px;background:#2e2e2e"></div>
<div class="a" style="left:445px;top:81px;width:921px;height:1px;background:#2e2e2e"></div>
<span class="t" style="left:90.4px;top:67.01px;font-size:10.5px;color:#f0f0f0;font-weight:bold;letter-spacing:0.197px;">bc_2s_landscape.psd bei 100% (Vektor-Smartobjekt, CMYK/8*) *</span>
<span class="t" style="left:453.8px;top:67.01px;font-size:10.5px;color:#a8a8a8;font-weight:bold;letter-spacing:0.213px;">bc_2s_landscape.psd bei 100% (Vektor-Smartobjekt, CMYK/8*) *</span>
<svg style="left:430.5px;top:69px;" width="6" height="6" viewBox="0 0 6 6"><path d="M0.500 0.500 L5.500 5.500 M5.500 0.500 L0.500 5.500" stroke="#e4e4e4" stroke-width="1.400"/></svg>
<svg style="left:794.5px;top:69px;" width="6" height="6" viewBox="0 0 6 6"><path d="M0.500 0.500 L5.500 5.500 M5.500 0.500 L0.500 5.500" stroke="#d8d8d8" stroke-width="1.400"/></svg>
<div id="hruler" class="a"></div>
<div id="vruler" class="a"></div>
<div id="corner" class="a"></div>
<svg style="left:0px;top:82px;" width="1349" height="16" viewBox="0 0 1349 16"><path d="M104.5 13V16 M115.5 13V16 M127.5 13V16 M139.5 12V16 M151.5 13V16 M163.5 13V16 M174.5 13V16 M186.5 13V16 M198.5 0V16 M210.5 13V16 M222.5 13V16 M234.5 13V16 M245.5 13V16 M257.5 12V16 M269.5 13V16 M281.5 13V16 M293.5 13V16 M304.5 13V16 M316.5 0V16 M328.5 13V16 M340.5 13V16 M352.5 13V16 M363.5 13V16 M375.5 12V16 M387.5 13V16 M399.5 13V16 M411.5 13V16 M423.5 13V16 M434.5 0V16 M446.5 13V16 M458.5 13V16 M470.5 13V16 M482.5 13V16 M493.5 12V16 M505.5 13V16 M517.5 13V16 M529.5 13V16 M541.5 13V16 M552.5 0V16 M564.5 13V16 M576.5 13V16 M588.5 13V16 M600.5 13V16 M611.5 12V16 M623.5 13V16 M635.5 13V16 M647.5 13V16 M659.5 13V16 M671.5 0V16 M682.5 13V16 M694.5 13V16 M706.5 13V16 M718.5 13V16 M730.5 12V16 M741.5 13V16 M753.5 13V16 M765.5 13V16 M777.5 13V16 M789.5 0V16 M800.5 13V16 M812.5 13V16 M824.5 13V16 M836.5 13V16 M848.5 12V16 M860.5 13V16 M871.5 13V16 M883.5 13V16 M895.5 13V16 M907.5 0V16 M919.5 13V16 M930.5 13V16 M942.5 13V16 M954.5 13V16 M966.5 12V16 M978.5 13V16 M989.5 13V16 M1001.5 13V16 M1013.5 13V16 M1025.5 0V16 M1037.5 13V16 M1048.5 13V16 M1060.5 13V16 M1072.5 13V16 M1084.5 12V16 M1096.5 13V16 M1108.5 13V16 M1119.5 13V16 M1131.5 13V16 M1143.5 0V16 M1155.5 13V16 M1167.5 13V16 M1178.5 13V16 M1190.5 13V16 M1202.5 12V16 M1214.5 13V16 M1226.5 13V16 M1237.5 13V16 M1249.5 13V16 M1261.5 0V16 M1273.5 13V16 M1285.5 13V16 M1297.5 13V16 M1308.5 13V16 M1320.5 12V16 M1332.5 13V16 M1344.5 13V16" stroke="#7a7a7a" stroke-width="1"/></svg>
<div class="a" style="left:97px;top:97px;width:1252px;height:1px;background:#6e6e6e"></div>
<span class="t" style="left:202px;top:82.16px;font-size:9.5px;color:#c2c2c2;-webkit-text-stroke:.22px;">0</span>
<span class="t" style="left:320px;top:82.16px;font-size:9.5px;color:#c2c2c2;-webkit-text-stroke:.22px;">1</span>
<span class="t" style="left:438px;top:82.16px;font-size:9.5px;color:#c2c2c2;-webkit-text-stroke:.22px;">2</span>
<span class="t" style="left:556px;top:82.16px;font-size:9.5px;color:#c2c2c2;-webkit-text-stroke:.22px;">3</span>
<span class="t" style="left:675px;top:82.16px;font-size:9.5px;color:#c2c2c2;-webkit-text-stroke:.22px;">4</span>
<span class="t" style="left:793px;top:82.16px;font-size:9.5px;color:#c2c2c2;-webkit-text-stroke:.22px;">5</span>
<span class="t" style="left:911px;top:82.16px;font-size:9.5px;color:#c2c2c2;-webkit-text-stroke:.22px;">6</span>
<span class="t" style="left:1029px;top:82.16px;font-size:9.5px;color:#c2c2c2;-webkit-text-stroke:.22px;">7</span>
<span class="t" style="left:1147px;top:82.16px;font-size:9.5px;color:#c2c2c2;-webkit-text-stroke:.22px;">8</span>
<span class="t" style="left:1265px;top:82.16px;font-size:9.5px;color:#c2c2c2;-webkit-text-stroke:.22px;">9</span>
<svg style="left:81px;top:0px;" width="16" height="1031" viewBox="0 0 16 1031"><path d="M13 109.5H16 M13 121.5H16 M13 132.5H16 M13 144.5H16 M12 156.5H16 M13 168.5H16 M13 180.5H16 M13 191.5H16 M13 203.5H16 M0 215.5H16 M13 227.5H16 M13 239.5H16 M13 250.5H16 M13 262.5H16 M12 274.5H16 M13 286.5H16 M13 298.5H16 M13 309.5H16 M13 321.5H16 M0 333.5H16 M13 345.5H16 M13 357.5H16 M13 369.5H16 M13 380.5H16 M12 392.5H16 M13 404.5H16 M13 416.5H16 M13 428.5H16 M13 439.5H16 M0 451.5H16 M13 463.5H16 M13 475.5H16 M13 487.5H16 M13 498.5H16 M12 510.5H16 M13 522.5H16 M13 534.5H16 M13 546.5H16 M13 558.5H16 M0 569.5H16 M13 581.5H16 M13 593.5H16 M13 605.5H16 M13 617.5H16 M12 628.5H16 M13 640.5H16 M13 652.5H16 M13 664.5H16 M13 676.5H16 M0 687.5H16 M13 699.5H16 M13 711.5H16 M13 723.5H16 M13 735.5H16 M12 746.5H16 M13 758.5H16 M13 770.5H16 M13 782.5H16 M13 794.5H16 M0 806.5H16 M13 817.5H16 M13 829.5H16 M13 841.5H16 M13 853.5H16 M12 865.5H16 M13 876.5H16 M13 888.5H16 M13 900.5H16 M13 912.5H16 M0 924.5H16 M13 935.5H16 M13 947.5H16 M13 959.5H16 M13 971.5H16 M12 983.5H16 M13 995.5H16 M13 1006.5H16 M13 1018.5H16 M13 1030.5H16" stroke="#7a7a7a" stroke-width="1"/></svg>
<div class="a" style="left:96px;top:98px;width:1px;height:933px;background:#6e6e6e"></div>
<span class="t" style="left:84.5px;top:97.76px;font-size:9.5px;color:#c2c2c2;-webkit-text-stroke:.22px;">1</span>
<span class="t" style="left:84px;top:215.76px;font-size:9.5px;color:#c2c2c2;-webkit-text-stroke:.22px;">0</span>
<span class="t" style="left:84px;top:333.76px;font-size:9.5px;color:#c2c2c2;-webkit-text-stroke:.22px;">1</span>
<span class="t" style="left:84px;top:451.76px;font-size:9.5px;color:#c2c2c2;-webkit-text-stroke:.22px;">2</span>
<span class="t" style="left:84px;top:569.76px;font-size:9.5px;color:#c2c2c2;-webkit-text-stroke:.22px;">3</span>
<span class="t" style="left:84px;top:687.76px;font-size:9.5px;color:#c2c2c2;-webkit-text-stroke:.22px;">4</span>
<span class="t" style="left:84px;top:806.76px;font-size:9.5px;color:#c2c2c2;-webkit-text-stroke:.22px;">5</span>
<span class="t" style="left:84px;top:924.76px;font-size:9.5px;color:#c2c2c2;-webkit-text-stroke:.22px;">6</span>
<div class="a" style="left:81px;top:82px;width:16px;height:16px;background:#535353;border-right:1px solid #3a3a3a;border-bottom:1px solid #3a3a3a"></div>
<div id="canvas" class="a">
  <div id="white" class="a"></div>
  <div id="brown" class="a"></div>
  <div id="bshadow" class="a"></div>
  <div class="gv" style="left:100px"></div>
  <div class="gv" style="left:123px"></div>
  <div class="gv" style="left:160px"></div>
  <div class="gv" style="left:625px"></div>
  <div class="gv" style="left:1092px"></div>
  <div class="gv" style="left:1129px"></div>
  <div class="gv" style="left:1150px"></div>
  <div class="gh" style="top:139px"></div>
  <div class="gh" style="top:176px"></div>
  <div class="gh" style="top:466px"></div>
  <div class="gh" style="top:642px"></div>
  <div class="gh" style="top:759px"></div>
  <div class="gh" style="top:793px"></div>
</div>
<div id="vscroll" class="a"></div>
<div id="hscroll" class="a"></div>
<div class="a" style="left:81px;top:1031px;width:48px;height:18px;background:#3a3a3a"></div>
<span class="t" style="left:92px;top:1034.41px;font-size:10.5px;color:#e6e6e6;-webkit-text-stroke:.22px;letter-spacing:-0.590px;">100%</span>
<div class="a" style="left:129px;top:1032px;width:207px;height:16px;background:#474747;border:1px solid #3a3a3a;border-top-color:#505050"></div>
<div class="a" style="left:152px;top:1032px;width:1px;height:16px;background:#3a3a3a"></div>
<div class="a" style="left:322px;top:1032px;width:1px;height:16px;background:#3a3a3a"></div>
<svg style="left:135px;top:1034px;" width="12" height="12" viewBox="0 0 12 12"><circle cx="6" cy="6" r="5.300" fill="#bdbdbd"/><path d="M5.500 3 V7 H9 V4.500Z" fill="#555"/></svg>
<span class="t" style="left:188.5px;top:1034.71px;font-size:10.5px;color:#e6e6e6;-webkit-text-stroke:.22px;letter-spacing:-0.307px;">Dok: 2,80 MB/8,99 MB</span>
<svg style="left:325.5px;top:1035px;" width="8" height="11" viewBox="0 0 8 11"><path d="M0.500 0.500 V10.500 L7.500 5.500Z" fill="#e8e8e8" stroke="#2c2c2c" stroke-width=".6"/></svg>
<div class="a" style="left:1348px;top:1031px;width:18px;height:18px;background:#484848"></div>
<div id="docline" class="a"></div>
<div id="rhead" class="a"></div>
<div id="icol" class="a"></div>
<div id="igap" class="a"></div>
<div id="panels" class="a"></div>
<svg style="left:1394px;top:65px;" width="8" height="5" viewBox="0 0 8 5"><path d="M3.500 0 L0 2.500 L3.500 5Z M7.500 0 L4 2.500 L7.500 5Z" fill="#d8d8d8"/></svg>
<svg style="left:1667.5px;top:65px;" width="8" height="5" viewBox="0 0 8 5"><path d="M0 0 L3.500 2.500 L0 5Z M4 0 L7.500 2.500 L4 5Z" fill="#d8d8d8"/></svg>
<div class="a" style="left:1368px;top:142px;width:38px;height:1px;background:#333"></div>
<div class="a" style="left:1368px;top:143px;width:38px;height:1px;background:#606060"></div>
<div class="a" style="left:1368px;top:183px;width:38px;height:1px;background:#333"></div>
<div class="a" style="left:1368px;top:184px;width:38px;height:1px;background:#606060"></div>
<div class="a" style="left:1368px;top:224px;width:38px;height:1px;background:#333"></div>
<div class="a" style="left:1368px;top:225px;width:38px;height:1px;background:#606060"></div>
<div class="a" style="left:1368px;top:265px;width:38px;height:1px;background:#333"></div>
<div class="a" style="left:1368px;top:266px;width:38px;height:1px;background:#606060"></div>
<div class="a" style="left:1377px;top:78px;width:20px;height:3px;background:repeating-linear-gradient(90deg,#303030 0 1px,transparent 1px 2px)"></div>
<div class="a" style="left:1377px;top:148px;width:20px;height:3px;background:repeating-linear-gradient(90deg,#303030 0 1px,transparent 1px 2px)"></div>
<div class="a" style="left:1377px;top:189px;width:20px;height:3px;background:repeating-linear-gradient(90deg,#303030 0 1px,transparent 1px 2px)"></div>
<div class="a" style="left:1377px;top:230px;width:20px;height:3px;background:repeating-linear-gradient(90deg,#303030 0 1px,transparent 1px 2px)"></div>
<svg style="left:1380px;top:89px;" width="17" height="18" viewBox="0 0 17 18"><rect x="0.500" y="0.500" width="4.500" height="4.500" fill="none" stroke="#c8c8c8"/><rect x="0.500" y="6.500" width="4.500" height="4.500" fill="none" stroke="#c8c8c8"/><rect x="0" y="12" width="5.500" height="5.500" fill="#c8c8c8"/><path d="M10 3 C15 4 15.500 10 10.500 13.500" fill="none" stroke="#c8c8c8" stroke-width="2"/><path d="M7.500 3.500 L12.500 0.500 L12 6Z" fill="#c8c8c8"/></svg>
<svg style="left:1380px;top:119px;" width="16" height="14" viewBox="0 0 16 14"><path d="M0.500 0.500 L15.500 7 L0.500 13.500Z" fill="#c8c8c8"/></svg>
<svg style="left:1379px;top:158.5px;" width="17" height="17" viewBox="0 0 17 17"><circle cx="8.500" cy="8.500" r="8" fill="#c8c8c8"/><rect x="7" y="7" width="3" height="6.500" fill="#555"/><circle cx="8.500" cy="4.300" r="1.700" fill="#555"/></svg>
<svg style="left:1378.5px;top:201.5px;" width="17" height="12" viewBox="0 0 17 12"><rect x="0" y="0" width="17" height="12" fill="#c8c8c8"/><rect x="1" y="1" width="4.500" height="4.500" fill="#2e2e2e"/><rect x="6.300" y="1" width="4.500" height="4.500" fill="#555"/><rect x="11.600" y="1" width="4.500" height="4.500" fill="#999"/><rect x="1" y="6.500" width="4.500" height="4.500" fill="#8a8a8a"/><rect x="6.300" y="6.500" width="4.500" height="4.500" fill="#6a6a6a"/><rect x="11.600" y="6.500" width="4.500" height="4.500" fill="#4c4c4c"/></svg>
<div class="a" style="left:1382px;top:239px;width:13px;height:13px;background:#d0d0d0"></div>
<span class="t" style="left:1378.5px;top:245.65px;font-size:14px;color:#e8e8e8;font-family:'Liberation Serif',serif;font-style:italic;text-shadow:0 0 1px #333,1px 0 0 #444">fx</span>
<div class="a" style="left:1408px;top:74px;width:271px;height:17px;background:#3f3f3f"></div>
<div class="a" style="left:1408px;top:90px;width:271px;height:1px;background:#333"></div>
<div class="a" style="left:1408px;top:74px;width:50px;height:17px;background:#535353;border-right:1px solid #333;border-top:1px solid #666"></div>
<span class="t" style="left:1414.7px;top:77.73px;font-size:10px;color:#f2f2f2;font-weight:bold;letter-spacing:-0.257px;">Zeichen</span>
<div class="a" style="left:1458px;top:74px;width:45px;height:16px;background:#484848;border-right:1px solid #333;border-top:1px solid #555"></div>
<span class="t" style="left:1465.4px;top:77.73px;font-size:10px;color:#a8a8a8;font-weight:bold;letter-spacing:-0.466px;">Absatz</span>
<svg style="left:1661px;top:80px;" width="14" height="8" viewBox="0 0 14 8"><path d="M0 1.500 H5 L2.500 4.500Z" fill="#d0d0d0"/><path d="M6 0.500 H14 M6 2.500 H14 M6 4.500 H14 M6 6.500 H14" stroke="#c8c8c8" stroke-width="1"/></svg>
<div class="a" style="left:1417px;top:97px;width:111px;height:19px;background:#3a3a3a;border:1px solid #2e2e2e;border-radius:2px;box-shadow:0 1px 0 #616161"></div>
<div class="a" style="left:1508px;top:97px;width:20px;height:19px;background:linear-gradient(#6a6a6a,#5a5a5a);border:1px solid #2e2e2e;border-radius:0 2px 2px 0;box-shadow:inset 0 1px 0 #7a7a7a"></div>
<svg style="left:1515.0px;top:105.5px;" width="6" height="4" viewBox="0 0 6 4"><path d="M0 0 H6 L3 3.500Z" fill="#e8e8e8"/></svg>
<span class="t" style="left:1422px;top:101.31px;font-size:10.5px;color:#e8e8e8;-webkit-text-stroke:.22px;letter-spacing:0.134px;">handwriting-dr...</span>
<div class="a" style="left:1539px;top:97px;width:76px;height:19px;background:#4c4c4c;border:1px solid #424242;border-radius:2px"></div>
<div class="a" style="left:1595px;top:97px;width:20px;height:19px;background:#5a5a5a;border:1px solid #444;border-radius:0 2px 2px 0"></div>
<svg style="left:1602px;top:105.5px;" width="6" height="4" viewBox="0 0 6 4"><path d="M0 0 H6 L3 3.500Z" fill="#888"/></svg>
<span class="t" style="left:1543.4px;top:101.31px;font-size:10.5px;color:#8a8a8a;-webkit-text-stroke:.22px;letter-spacing:-0.540px;">Regular</span>
<div class="a" style="left:1408px;top:122px;width:230px;height:1px;background:#3e3e3e"></div>
<div class="a" style="left:1408px;top:123px;width:230px;height:1px;background:#606060"></div>
<span class="t" style="left:1410.5px;top:134.53px;font-size:10px;color:#cfcfcf;font-family:'Liberation Serif',serif;">T</span>
<span class="t" style="left:1415px;top:128.61px;font-size:17px;color:#cfcfcf;font-family:'Liberation Serif',serif;">T</span>
<div class="a" style="left:1431px;top:128px;width:97px;height:18px;background:#3a3a3a;border:1px solid #2e2e2e;border-radius:2px;box-shadow:0 1px 0 #616161"></div>
<div class="a" style="left:1508px;top:128px;width:20px;height:18px;background:linear-gradient(#6a6a6a,#5a5a5a);border:1px solid #2e2e2e;border-radius:0 2px 2px 0;box-shadow:inset 0 1px 0 #7a7a7a"></div>
<svg style="left:1515.0px;top:136.0px;" width="6" height="4" viewBox="0 0 6 4"><path d="M0 0 H6 L3 3.500Z" fill="#e8e8e8"/></svg>
<span class="t" style="left:1436.6px;top:132.03px;font-size:10px;color:#e8e8e8;-webkit-text-stroke:.22px;letter-spacing:-0.372px;">18 Pt</span>
<svg style="left:1535px;top:129px;" width="15" height="16" viewBox="0 0 15 16"><path d="M6 0.500 H15 M6 15.500 H15" stroke="#cfcfcf"/><path d="M2.500 2 V8 M2.500 1 l-2.500 3 h5z M2.500 9 l-2.500 -3 h5z" stroke="#cfcfcf" fill="#cfcfcf" stroke-width=".8"/></svg>
<span class="t" style="left:1541.5px;top:129.80px;font-size:8.5px;color:#cfcfcf;-webkit-text-stroke:.22px;">A</span>
<span class="t" style="left:1541.5px;top:137.80px;font-size:8.5px;color:#cfcfcf;-webkit-text-stroke:.22px;">A</span>
<div class="a" style="left:1555px;top:128px;width:77px;height:18px;background:#3a3a3a;border:1px solid #2e2e2e;border-radius:2px;box-shadow:0 1px 0 #616161"></div>
<div class="a" style="left:1612px;top:128px;width:20px;height:18px;background:linear-gradient(#6a6a6a,#5a5a5a);border:1px solid #2e2e2e;border-radius:0 2px 2px 0;box-shadow:inset 0 1px 0 #7a7a7a"></div>
<svg style="left:1619.0px;top:136.0px;" width="6" height="4" viewBox="0 0 6 4"><path d="M0 0 H6 L3 3.500Z" fill="#e8e8e8"/></svg>
<span class="t" style="left:1560.2px;top:132.03px;font-size:10px;color:#e8e8e8;-webkit-text-stroke:.22px;letter-spacing:-0.372px;">30 Pt</span>
<span class="t" style="left:1409.5px;top:153.65px;font-size:14px;color:#cfcfcf;">V</span>
<span class="t" style="left:1416px;top:153.65px;font-size:14px;color:#cfcfcf;">A</span>
<span class="t" style="left:1415px;top:154.15px;font-size:14px;color:#cfcfcf;">/</span>
<svg style="left:1413px;top:166.5px;" width="11" height="4" viewBox="0 0 11 4"><path d="M0 2 H11 M0 2 l2.500 -2 v4z" stroke="#cfcfcf" fill="#cfcfcf" stroke-width=".8"/></svg>
<div class="a" style="left:1431px;top:152px;width:97px;height:18px;background:#3a3a3a;border:1px solid #2e2e2e;border-radius:2px;box-shadow:0 1px 0 #616161"></div>
<div class="a" style="left:1508px;top:152px;width:20px;height:18px;background:linear-gradient(#6a6a6a,#5a5a5a);border:1px solid #2e2e2e;border-radius:0 2px 2px 0;box-shadow:inset 0 1px 0 #7a7a7a"></div>
<svg style="left:1515.0px;top:160.0px;" width="6" height="4" viewBox="0 0 6 4"><path d="M0 0 H6 L3 3.500Z" fill="#e8e8e8"/></svg>
<span class="t" style="left:1436.6px;top:156.03px;font-size:10px;color:#e8e8e8;-webkit-text-stroke:.22px;letter-spacing:-0.162px;">Metrisch</span>
<div class="a" style="left:1535px;top:153px;width:17px;height:10px;border:1px solid #cfcfcf;background:#777"></div>
<span class="t" style="left:1536.5px;top:153.53px;font-size:10px;color:#e8e8e8;font-weight:bold;letter-spacing:0.422px;">VA</span>
<svg style="left:1534px;top:165px;" width="19" height="4" viewBox="0 0 19 4"><path d="M1 2 H18 M0 2 l2.500 -2 v4z M19 2 l-2.500 -2 v4z" stroke="#cfcfcf" fill="#cfcfcf" stroke-width=".8"/></svg>
<div class="a" style="left:1555px;top:152px;width:77px;height:18px;background:#3a3a3a;border:1px solid #2e2e2e;border-radius:2px;box-shadow:0 1px 0 #616161"></div>
<div class="a" style="left:1612px;top:152px;width:20px;height:18px;background:linear-gradient(#6a6a6a,#5a5a5a);border:1px solid #2e2e2e;border-radius:0 2px 2px 0;box-shadow:inset 0 1px 0 #7a7a7a"></div>
<svg style="left:1619.0px;top:160.0px;" width="6" height="4" viewBox="0 0 6 4"><path d="M0 0 H6 L3 3.500Z" fill="#e8e8e8"/></svg>
<span class="t" style="left:1560.2px;top:156.03px;font-size:10px;color:#e8e8e8;-webkit-text-stroke:.22px;">0</span>
<div class="a" style="left:1408px;top:174px;width:230px;height:1px;background:#3e3e3e"></div>
<div class="a" style="left:1408px;top:175px;width:230px;height:1px;background:#606060"></div>
<svg style="left:1410px;top:182px;" width="6" height="16" viewBox="0 0 6 16"><path d="M3 2 V14 M3 0 l-2.500 3 h5z M3 16 l-2.500 -3 h5z" stroke="#cfcfcf" fill="#cfcfcf" stroke-width=".8"/></svg>
<span class="t" style="left:1415.5px;top:181.26px;font-size:18px;color:#cfcfcf;font-family:'Liberation Serif',serif;">T</span>
<div class="a" style="left:1432px;top:181px;width:54px;height:17px;background:#3a3a3a;border:1px solid #2e2e2e;border-radius:2px;box-shadow:0 1px 0 #616161"></div>
<span class="t" style="left:1437.4px;top:184.53px;font-size:10px;color:#e8e8e8;-webkit-text-stroke:.22px;letter-spacing:-0.270px;">100%</span>
<span class="t" style="left:1552.5px;top:177.80px;font-size:15px;color:#cfcfcf;font-family:'Liberation Serif',serif;font-weight:bold;transform:scaleX(1.500);transform-origin:0 0;">T</span>
<svg style="left:1551px;top:192.5px;" width="18" height="4" viewBox="0 0 18 4"><path d="M1 2 H17 M0 2 l2.500 -2 v4z M18 2 l-2.500 -2 v4z" stroke="#cfcfcf" fill="#cfcfcf" stroke-width=".8"/></svg>
<div class="a" style="left:1573px;top:181px;width:54px;height:17px;background:#3a3a3a;border:1px solid #2e2e2e;border-radius:2px;box-shadow:0 1px 0 #616161"></div>
<span class="t" style="left:1579px;top:184.53px;font-size:10px;color:#e8e8e8;-webkit-text-stroke:.22px;letter-spacing:-0.270px;">100%</span>
<span class="t" style="left:1410.5px;top:203.50px;font-size:13px;color:#cfcfcf;">A</span>
<span class="t" style="left:1420px;top:202.38px;font-size:9px;color:#cfcfcf;-webkit-text-stroke:.22px;">a</span>
<div class="a" style="left:1411px;top:216px;width:9px;height:1px;background:#cfcfcf"></div>
<svg style="left:1421px;top:212px;" width="4" height="7" viewBox="0 0 4 7"><path d="M2 2 V7 M2 0 l-2 2.500 h4z" stroke="#cfcfcf" fill="#cfcfcf" stroke-width=".7"/></svg>
<div class="a" style="left:1432px;top:201px;width:54px;height:17px;background:#3a3a3a;border:1px solid #2e2e2e;border-radius:2px;box-shadow:0 1px 0 #616161"></div>
<span class="t" style="left:1437.4px;top:204.53px;font-size:10px;color:#e8e8e8;-webkit-text-stroke:.22px;letter-spacing:-0.199px;">0 Pt</span>
<span class="t" style="left:1536.2px;top:204.03px;font-size:10px;color:#e8e8e8;-webkit-text-stroke:.22px;letter-spacing:-0.151px;">Farbe:</span>
<div class="a" style="left:1573px;top:201px;width:54px;height:17px;background:#40362f;border:1px solid #2e2e2e;box-shadow:0 1px 0 #616161"></div>
<div class="a" style="left:1408px;top:222px;width:230px;height:1px;background:#3e3e3e"></div>
<div class="a" style="left:1408px;top:223px;width:230px;height:1px;background:#606060"></div>
<span class="t" style="left:1433.5px;top:231.80px;font-size:15px;color:#d2d2d2;font-family:'Liberation Serif',serif;font-weight:bold;">T</span>
<span class="t" style="left:1457.5px;top:231.80px;font-size:15px;color:#d2d2d2;font-family:'Liberation Serif',serif;font-weight:bold;font-style:italic;">T</span>
<span class="t" style="left:1477.5px;top:231.80px;font-size:15px;color:#d2d2d2;font-family:'Liberation Serif',serif;font-weight:bold;letter-spacing:-1px;">TT</span>
<span class="t" style="left:1502.5px;top:231.80px;font-size:15px;color:#d2d2d2;font-family:'Liberation Serif',serif;font-weight:bold;">T</span>
<span class="t" style="left:1512px;top:235.19px;font-size:11px;color:#d2d2d2;font-family:'Liberation Serif',serif;font-weight:bold;">T</span>
<span class="t" style="left:1528px;top:231.80px;font-size:15px;color:#d2d2d2;font-family:'Liberation Serif',serif;font-weight:bold;">T</span>
<span class="t" style="left:1538px;top:233.07px;font-size:7px;color:#d2d2d2;font-family:'Liberation Serif',serif;font-weight:bold;">1</span>
<span class="t" style="left:1552px;top:231.80px;font-size:15px;color:#d2d2d2;font-family:'Liberation Serif',serif;font-weight:bold;">T</span>
<span class="t" style="left:1562px;top:240.07px;font-size:7px;color:#d2d2d2;font-family:'Liberation Serif',serif;font-weight:bold;">1</span>
<span class="t" style="left:1577.5px;top:231.80px;font-size:15px;color:#d2d2d2;font-family:'Liberation Serif',serif;font-weight:bold;">T</span>
<div class="a" style="left:1577px;top:246px;width:11px;height:1px;background:#d2d2d2"></div>
<span class="t" style="left:1602px;top:231.80px;font-size:15px;color:#d2d2d2;font-family:'Liberation Serif',serif;font-weight:bold;">T</span>
<div class="a" style="left:1601px;top:239px;width:12px;height:1px;background:#d2d2d2"></div>
<div class="a" style="left:1408px;top:254px;width:230px;height:1px;background:#3e3e3e"></div>
<div class="a" style="left:1408px;top:255px;width:230px;height:1px;background:#606060"></div>
<span class="t" style="left:1434px;top:264.30px;font-size:15px;color:#8a8a8a;font-family:'Liberation Serif',serif;">fi</span>
<span class="t" style="left:1457px;top:264.30px;font-size:15px;color:#8a8a8a;font-family:'Liberation Serif',serif;font-style:italic;">o</span>
<div class="a" style="left:1462px;top:267px;width:6px;height:1px;background:#8a8a8a;transform:rotate(-30deg)"></div>
<span class="t" style="left:1481px;top:264.30px;font-size:15px;color:#8a8a8a;font-family:'Liberation Serif',serif;">st</span>
<span class="t" style="left:1504.5px;top:264.30px;font-size:15px;color:#8a8a8a;font-family:'Liberation Serif',serif;font-style:italic;">A</span>
<span class="t" style="left:1527.5px;top:265.15px;font-size:14px;color:#8a8a8a;font-family:'Liberation Serif',serif;">aa</span>
<div class="a" style="left:1528px;top:265px;width:13px;height:1px;background:#8a8a8a"></div>
<span class="t" style="left:1553.5px;top:264.30px;font-size:15px;color:#8a8a8a;font-family:'Liberation Serif',serif;font-style:italic;">T</span>
<span class="t" style="left:1576px;top:264.30px;font-size:15px;color:#8a8a8a;font-family:'Liberation Serif',serif;">1</span>
<span class="t" style="left:1582.5px;top:263.04px;font-size:10px;color:#8a8a8a;font-family:'Liberation Serif',serif;">st</span>
<span class="t" style="left:1601px;top:264.30px;font-size:15px;color:#8a8a8a;font-family:'Liberation Serif',serif;">½</span>
<div class="a" style="left:1408px;top:286px;width:230px;height:1px;background:#3e3e3e"></div>
<div class="a" style="left:1408px;top:287px;width:230px;height:1px;background:#606060"></div>
<div class="a" style="left:1415px;top:293px;width:115px;height:18px;border:1px solid #303030;border-radius:3px;background:linear-gradient(#6b6b6b,#595959);box-shadow:inset 0 1px 0 #7c7c7c,0 1px 0 #5e5e5e"></div>
<span class="t" style="left:1424px;top:296.84px;font-size:10px;color:#e8e8e8;-webkit-text-stroke:.22px;letter-spacing:0.058px;">Deutsch: neue Re...</span>
<svg style="left:1520.5px;top:297px;" width="7" height="10" viewBox="0 0 7 10"><path d="M3.500 0 L7 4 L0 4Z M0 6 L7 6 L3.500 10Z" fill="#e8e8e8"/></svg>
<span class="t" style="left:1536.5px;top:293.19px;font-size:11px;color:#cfcfcf;font-family:'Liberation Serif',serif;">a</span>
<span class="t" style="left:1542px;top:294.30px;font-size:15px;color:#cfcfcf;font-family:'Liberation Serif',serif;">a</span>
<div class="a" style="left:1557px;top:293px;width:74px;height:18px;border:1px solid #303030;border-radius:3px;background:linear-gradient(#6b6b6b,#595959);box-shadow:inset 0 1px 0 #7c7c7c,0 1px 0 #5e5e5e"></div>
<span class="t" style="left:1564.7px;top:296.84px;font-size:10px;color:#e8e8e8;-webkit-text-stroke:.22px;letter-spacing:0.132px;">Scharf</span>
<svg style="left:1620.5px;top:297px;" width="7" height="10" viewBox="0 0 7 10"><path d="M3.500 0 L7 4 L0 4Z M0 6 L7 6 L3.500 10Z" fill="#e8e8e8"/></svg>
<div class="a" style="left:1408px;top:318px;width:271px;height:2px;background:#333"></div>
<div class="a" style="left:1408px;top:320px;width:271px;height:17px;background:#3f3f3f"></div>
<div class="a" style="left:1408px;top:336px;width:271px;height:1px;background:#333"></div>
<div class="a" style="left:1408px;top:320px;width:83px;height:17px;background:#535353;border-right:1px solid #333;border-top:1px solid #666"></div>
<span class="t" style="left:1415.3px;top:323.74px;font-size:10px;color:#f2f2f2;font-weight:bold;letter-spacing:-0.113px;">Absatzformate</span>
<div class="a" style="left:1491px;top:320px;width:88px;height:16px;background:#484848;border-right:1px solid #333;border-top:1px solid #555"></div>
<span class="t" style="left:1498px;top:323.74px;font-size:10px;color:#a8a8a8;font-weight:bold;letter-spacing:-0.076px;">Zeichenformate</span>
<svg style="left:1661px;top:326px;" width="14" height="8" viewBox="0 0 14 8"><path d="M0 1.500 H5 L2.500 4.500Z" fill="#d0d0d0"/><path d="M6 0.500 H14 M6 2.500 H14 M6 4.500 H14 M6 6.500 H14" stroke="#c8c8c8" stroke-width="1"/></svg>
<div class="a" style="left:1408px;top:337px;width:255px;height:202px;background:#484848"></div>
<div class="a" style="left:1663px;top:337px;width:16px;height:202px;background:#4f4f4f;border-left:1px solid #444"></div>
<div class="a" style="left:1408px;top:339px;width:255px;height:22px;background:#57677f"></div>
<span class="t" style="left:1415.3px;top:343.84px;font-size:10px;color:#f0f0f0;-webkit-text-stroke:.22px;font-style:italic;letter-spacing:-0.147px;">Basisabsatz</span>
<div class="a" style="left:1408px;top:539px;width:271px;height:19px;background:#535353;border-top:1px solid #383838"></div>
<svg style="left:1547px;top:543px;" width="14" height="13" viewBox="0 0 14 13"><path d="M3 3.500 A5 5 0 1 1 2.500 8.500" fill="none" stroke="#8a8a8a" stroke-width="1.300"/><path d="M0.500 2 L5.500 1.500 L4 6Z" fill="#8a8a8a"/><path d="M1 12.500 H13" stroke="#8a8a8a"/></svg>
<svg style="left:1576px;top:543px;" width="14" height="12" viewBox="0 0 14 12"><path d="M1 7 L5 11 L13 1" fill="none" stroke="#8a8a8a" stroke-width="2.400"/></svg>
<svg style="left:1609px;top:544px;" width="12" height="11" viewBox="0 0 12 11"><path d="M0.500 0.500 H11.500 V10.500 H4.500 V4.500 H0.500Z" fill="#d4d4d4"/><path d="M0.500 5.500 H3.500 V9Z" fill="#d4d4d4"/></svg>
<svg style="left:1637.5px;top:543px;" width="12" height="13" viewBox="0 0 12 13"><path d="M0 2.500 H12 M4 2 V0.500 H8 V2" fill="none" stroke="#8a8a8a" stroke-width="1"/><path d="M1.500 4 H10.500 V12.500 H1.500Z" fill="none" stroke="#8a8a8a"/><path d="M3.500 5 V11.500 M5.500 5 V11.500 M7.500 5 V11.500 M9.500 5 V11.500" stroke="#8a8a8a" stroke-width=".8"/></svg>
<svg style="left:1668px;top:547px;" width="9" height="9" viewBox="0 0 9 9"><path d="M8 1 v1 M6 3 v1 M8 3 v1 M4 5 v1 M6 5 v1 M8 5 v1 M2 7 v1 M4 7 v1 M6 7 v1 M8 7 v1" stroke="#6e6e6e"/></svg>
<div class="a" style="left:1408px;top:558px;width:271px;height:2px;background:#333"></div>
<div class="a" style="left:1408px;top:560px;width:271px;height:18px;background:#3f3f3f"></div>
<div class="a" style="left:1408px;top:577px;width:271px;height:1px;background:#333"></div>
<div class="a" style="left:1408px;top:560px;width:47px;height:18px;background:#535353;border-right:1px solid #333;border-top:1px solid #666"></div>
<span class="t" style="left:1415.3px;top:564.74px;font-size:10px;color:#f2f2f2;font-weight:bold;letter-spacing:-0.571px;">Ebenen</span>
<div class="a" style="left:1455px;top:560px;width:46px;height:17px;background:#484848;border-right:1px solid #333;border-top:1px solid #555"></div>
<span class="t" style="left:1462.2px;top:564.74px;font-size:10px;color:#a8a8a8;font-weight:bold;letter-spacing:-0.249px;">Kanäle</span>
<div class="a" style="left:1501px;top:560px;width:42px;height:17px;background:#484848;border-right:1px solid #333;border-top:1px solid #555"></div>
<span class="t" style="left:1509.5px;top:564.74px;font-size:10px;color:#a8a8a8;font-weight:bold;letter-spacing:-0.247px;">Pfade</span>
<svg style="left:1661px;top:566px;" width="14" height="8" viewBox="0 0 14 8"><path d="M0 1.500 H5 L2.500 4.500Z" fill="#d0d0d0"/><path d="M6 0.500 H14 M6 2.500 H14 M6 4.500 H14 M6 6.500 H14" stroke="#c8c8c8" stroke-width="1"/></svg>
<div class="a" style="left:1412px;top:583px;width:75px;height:19px;border:1px solid #303030;border-radius:3px;background:linear-gradient(#6b6b6b,#595959);box-shadow:inset 0 1px 0 #7c7c7c,0 1px 0 #5e5e5e"></div>
<svg style="left:1418px;top:587px;" width="10" height="11" viewBox="0 0 10 11"><circle cx="5.800" cy="4.200" r="3.300" fill="none" stroke="#e8e8e8" stroke-width="1.300"/><path d="M3.500 6.500 L0.800 10" stroke="#e8e8e8" stroke-width="1.600"/></svg>
<span class="t" style="left:1434px;top:587.53px;font-size:10px;color:#e8e8e8;-webkit-text-stroke:.22px;letter-spacing:0.173px;">Art</span>
<svg style="left:1476px;top:587.5px;" width="7" height="10" viewBox="0 0 7 10"><path d="M3.500 0 L7 4 L0 4Z M0 6 L7 6 L3.500 10Z" fill="#e8e8e8"/></svg>
<svg style="left:1521px;top:586px;" width="14" height="12" viewBox="0 0 14 12"><rect x="0.500" y="0.500" width="13" height="11" fill="none" stroke="#c4c4c4"/><path d="M2 9.500 L5 5.500 L7 8 L9 6.500 L12 9.500Z" fill="#c4c4c4"/><circle cx="9.500" cy="3.500" r="1.200" fill="#c4c4c4"/></svg>
<svg style="left:1545.5px;top:586px;" width="12" height="12" viewBox="0 0 12 12"><circle cx="6" cy="6" r="5.300" fill="none" stroke="#c4c4c4" stroke-width="1.200"/><path d="M2.200 9.800 A5.300 5.300 0 0 1 9.800 2.200Z" fill="#c4c4c4"/></svg>
<span class="t" style="left:1568.5px;top:584.18px;font-size:15.5px;color:#c4c4c4;font-family:'Liberation Serif',serif;font-weight:bold;">T</span>
<svg style="left:1593.5px;top:586px;" width="13" height="12" viewBox="0 0 13 12"><rect x="1.500" y="1.500" width="10" height="9" fill="none" stroke="#c4c4c4"/><rect x="0" y="0" width="3" height="3" fill="#c4c4c4"/><rect x="10" y="0" width="3" height="3" fill="#c4c4c4"/><rect x="0" y="9" width="3" height="3" fill="#c4c4c4"/><rect x="10" y="9" width="3" height="3" fill="#c4c4c4"/></svg>
<svg style="left:1618px;top:585px;" width="12" height="13" viewBox="0 0 12 13"><path d="M4.500 0.500 H8.500 L11.500 3.500 V12.500 H4.500Z" fill="#535353" stroke="#c4c4c4"/><path d="M8.500 0.500 V3.500 H11.500" fill="none" stroke="#c4c4c4"/><rect x="0" y="5" width="6" height="8" fill="#c4c4c4"/></svg>
<div class="a" style="left:1665px;top:583px;width:9px;height:17px;border:1px solid #2e2e2e;border-radius:2px;background:#3e3e3e"></div>
<div class="a" style="left:1666px;top:584px;width:7px;height:8px;background:linear-gradient(#8e8e8e,#6c6c6c);border-radius:1px"></div>
<div class="a" style="left:1408px;top:605px;width:271px;height:1px;background:#494949"></div>
<div class="a" style="left:1408px;top:606px;width:271px;height:1px;background:#5a5a5a"></div>
<div class="a" style="left:1412px;top:610px;width:148px;height:19px;border:1px solid #303030;border-radius:3px;background:linear-gradient(#6b6b6b,#595959);box-shadow:inset 0 1px 0 #7c7c7c,0 1px 0 #5e5e5e"></div>
<span class="t" style="left:1419.8px;top:615.33px;font-size:10px;color:#e8e8e8;-webkit-text-stroke:.22px;letter-spacing:-0.039px;">Normal</span>
<svg style="left:1547px;top:614.5px;" width="7" height="10" viewBox="0 0 7 10"><path d="M3.500 0 L7 4 L0 4Z M0 6 L7 6 L3.500 10Z" fill="#e8e8e8"/></svg>
<span class="t" style="left:1567px;top:614.13px;font-size:10px;color:#e8e8e8;-webkit-text-stroke:.22px;letter-spacing:0.028px;">Deckkraft:</span>
<div class="a" style="left:1618px;top:610px;width:57px;height:19px;background:#3a3a3a;border:1px solid #2e2e2e;border-radius:2px;box-shadow:0 1px 0 #616161"></div>
<div class="a" style="left:1656px;top:610px;width:19px;height:19px;background:linear-gradient(#6a6a6a,#5a5a5a);border:1px solid #2e2e2e;border-radius:0 2px 2px 0;box-shadow:inset 0 1px 0 #7a7a7a"></div>
<svg style="left:1662.5px;top:618.5px;" width="6" height="4" viewBox="0 0 6 4"><path d="M0 0 H6 L3 3.500Z" fill="#e8e8e8"/></svg>
<span class="t" style="left:1623.2px;top:615.13px;font-size:10px;color:#e8e8e8;-webkit-text-stroke:.22px;letter-spacing:-0.245px;">100%</span>
<div class="a" style="left:1408px;top:633px;width:271px;height:1px;background:#3e3e3e"></div>
<div class="a" style="left:1408px;top:634px;width:271px;height:1px;background:#606060"></div>
<span class="t" style="left:1413.9px;top:643.53px;font-size:10px;color:#e8e8e8;-webkit-text-stroke:.22px;letter-spacing:-0.129px;">Fixieren:</span>
<svg style="left:1461.5px;top:642.5px;" width="12" height="12" viewBox="0 0 12 12"><rect width="12" height="12" fill="#6a6a6a"/><path d="M0 0h3v3h-3z M6 0h3v3h-3z M3 3h3v3h-3z M9 3h3v3h-3z M0 6h3v3h-3z M6 6h3v3h-3z M3 9h3v3h-3z M9 9h3v3h-3z" fill="#8e8e8e"/></svg>
<svg style="left:1481px;top:641px;" width="18" height="14" viewBox="0 0 18 14"><path d="M17 0.500 L8.500 8.500 L7.500 7.500Z" fill="#9a9a9a" stroke="#9a9a9a" stroke-width="1.200"/><path d="M8 8 c-1.500 -1 -3.500 0 -4.500 1.500 c-1 1.500 -2.500 2 -3.500 1.800 c2.500 1.800 6.500 1.700 8 0 c1 -1 1 -2.300 0 -3.300z" fill="#9a9a9a"/></svg>
<svg style="left:1505px;top:642px;" width="13" height="13" viewBox="0 0 13 13"><path d="M6.500 1.500 V11.500 M1.500 6.500 H11.500" stroke="#c4c4c4" stroke-width="1.200"/><path d="M6.500 0 l-2.300 2.800 h4.600z M6.500 13 l-2.300 -2.800 h4.600z M0 6.500 l2.800 -2.300 v4.600z M13 6.500 l-2.800 -2.300 v4.600z" fill="#c4c4c4"/></svg>
<svg style="left:1528.5px;top:642px;" width="11" height="13" viewBox="0 0 11 13"><path d="M2.500 6 V4 a3 3 0 0 1 6 0 V6" fill="none" stroke="#c4c4c4" stroke-width="1.600"/><rect x="0.500" y="6" width="10" height="6.500" rx="1" fill="#c4c4c4"/><rect x="5" y="8" width="1.500" height="2.500" fill="#444"/></svg>
<span class="t" style="left:1580.9px;top:641.83px;font-size:10px;color:#e8e8e8;-webkit-text-stroke:.22px;letter-spacing:-0.200px;">Fläche:</span>
<div class="a" style="left:1618px;top:638px;width:57px;height:19px;background:#3a3a3a;border:1px solid #2e2e2e;border-radius:2px;box-shadow:0 1px 0 #616161"></div>
<div class="a" style="left:1656px;top:638px;width:19px;height:19px;background:linear-gradient(#6a6a6a,#5a5a5a);border:1px solid #2e2e2e;border-radius:0 2px 2px 0;box-shadow:inset 0 1px 0 #7a7a7a"></div>
<svg style="left:1662.5px;top:646.5px;" width="6" height="4" viewBox="0 0 6 4"><path d="M0 0 H6 L3 3.500Z" fill="#e8e8e8"/></svg>
<span class="t" style="left:1623.2px;top:642.53px;font-size:10px;color:#e8e8e8;-webkit-text-stroke:.22px;letter-spacing:-0.245px;">100%</span>
<div class="a" style="left:1408px;top:663px;width:256px;height:366px;background:#484848"></div>
<div class="a" style="left:1664px;top:663px;width:15px;height:366px;background:#494949;border-left:1px solid #414141"></div>
<div class="a" style="left:1408px;top:662px;width:271px;height:1px;background:#383838"></div>
<div class="a" style="left:1408px;top:664px;width:256px;height:29px;background:#535353;border-bottom:1px solid #3c3c3c"></div>
<div class="a" style="left:1408px;top:664px;width:31px;height:29px;background:#535353;border-right:1px solid #3e3e3e;border-bottom:1px solid #3c3c3c"></div>
<div class="a" style="left:1417px;top:672.0px;width:12px;height:12px;border:1px solid #6c6c6c;border-top-color:#3c3c3c;border-left-color:#3c3c3c;background:#4f4f4f"></div>
<div class="a" style="left:1442px;top:667.0px;width:32px;height:22px;background:#3b322d;border:1px solid #2a2a2a"></div>
<div class="a" style="left:1455px;top:674.0px;width:7px;height:7px;background:#8fd0c0;border-radius:50%"></div>
<span class="t" style="left:1484.3px;top:674.74px;font-size:10px;color:#f0f0f0;-webkit-text-stroke:.22px;letter-spacing:0.009px;">Vektor-Smartobjekt</span>
<div class="a" style="left:1408px;top:693px;width:256px;height:29px;background:#535353;border-bottom:1px solid #3c3c3c"></div>
<div class="a" style="left:1408px;top:693px;width:31px;height:29px;background:#535353;border-right:1px solid #3e3e3e;border-bottom:1px solid #3c3c3c"></div>
<div class="a" style="left:1417px;top:701.0px;width:12px;height:12px;border:1px solid #6c6c6c;border-top-color:#3c3c3c;border-left-color:#3c3c3c;background:#4f4f4f"></div>
<div class="a" style="left:1442px;top:696.0px;width:32px;height:22px;background:#fff;border:2px solid #8a3418;outline:1px solid #2a2a2a;outline-offset:-1px"></div>
<span class="t" style="left:1484.3px;top:703.74px;font-size:10px;color:#f0f0f0;-webkit-text-stroke:.22px;letter-spacing:-0.083px;">Vorlage Vorderseite</span>
<div class="a" style="left:1408px;top:722px;width:256px;height:29px;background:#57677f;border-bottom:1px solid #3c3c3c"></div>
<div class="a" style="left:1408px;top:722px;width:31px;height:29px;background:#535353;border-right:1px solid #3e3e3e;border-bottom:1px solid #3c3c3c"></div>
<svg style="left:1416px;top:731.5px;" width="14" height="9" viewBox="0 0 14 9"><path d="M0.500 4.500 C3 0.500 11 0.500 13.500 4.500 C11 8.500 3 8.500 0.500 4.500Z" fill="#c2c2c2"/><circle cx="7" cy="4.500" r="2.600" fill="#4a4a4a"/><circle cx="7" cy="4.500" r="1.100" fill="#c2c2c2"/></svg>
<div class="a" style="left:1442px;top:725.0px;width:32px;height:22px;background:repeating-conic-gradient(#fff 0 25%,#cfcfcf 0 50%) 0 0/8px 8px"></div>
<div class="a" style="left:1442px;top:740.0px;width:20px;height:7px;background:#2e2e2e"></div>
<div class="a" style="left:1462px;top:736.0px;width:11px;height:11px;background:#aeb9cf;border:1px solid #2e2e2e"></div>
<svg style="left:1465px;top:738.0px;" width="7" height="8" viewBox="0 0 7 8"><path d="M0.500 0.500 H4 L6.500 3 V7.500 H0.500Z" fill="#e8e8e8" stroke="#333" stroke-width=".8"/></svg>
<svg style="left:1439px;top:723.0px;" width="38" height="27" viewBox="0 0 38 27"><path d="M0.500 5 V0.500 H5 M33 0.500 H37.500 V5 M37.500 22 V26.500 H33 M5 26.500 H0.500 V22" fill="none" stroke="#fff" stroke-width="1"/></svg>
<span class="t" style="left:1484.3px;top:732.74px;font-size:10px;color:#f0f0f0;-webkit-text-stroke:.22px;letter-spacing:0.009px;">Vektor-Smartobjekt</span>
<div class="a" style="left:1408px;top:751px;width:256px;height:39px;background:#535353;border-bottom:1px solid #3c3c3c"></div>
<div class="a" style="left:1408px;top:751px;width:31px;height:39px;background:#535353;border-right:1px solid #3e3e3e;border-bottom:1px solid #3c3c3c"></div>
<svg style="left:1416px;top:765.5px;" width="14" height="9" viewBox="0 0 14 9"><path d="M0.500 4.500 C3 0.500 11 0.500 13.500 4.500 C11 8.500 3 8.500 0.500 4.500Z" fill="#c2c2c2"/><circle cx="7" cy="4.500" r="2.600" fill="#4a4a4a"/><circle cx="7" cy="4.500" r="1.100" fill="#c2c2c2"/></svg>
<div class="a" style="left:1442px;top:759.0px;width:32px;height:22px;background:#fff;border:1px solid #2a2a2a"></div>
<div class="a" style="left:1461px;top:769.0px;width:13px;height:12px;background:#535353"></div>
<svg style="left:1463px;top:770.0px;" width="11" height="11" viewBox="0 0 11 11"><rect x="2" y="2" width="7" height="7" fill="none" stroke="#d8d8d8"/><rect x="0.500" y="0.500" width="2.500" height="2.500" fill="#535353" stroke="#d8d8d8" stroke-width=".8"/><rect x="8" y="0.500" width="2.500" height="2.500" fill="#535353" stroke="#d8d8d8" stroke-width=".8"/><rect x="0.500" y="8" width="2.500" height="2.500" fill="#535353" stroke="#d8d8d8" stroke-width=".8"/><rect x="8" y="8" width="2.500" height="2.500" fill="#535353" stroke="#d8d8d8" stroke-width=".8"/></svg>
<span class="t" style="left:1484.3px;top:766.74px;font-size:10px;color:#f0f0f0;-webkit-text-stroke:.22px;letter-spacing:-0.273px;">Rechteck 2</span>
<div class="a" style="left:1408px;top:790px;width:256px;height:29px;background:#535353;border-bottom:1px solid #3c3c3c"></div>
<div class="a" style="left:1408px;top:790px;width:31px;height:29px;background:#535353;border-right:1px solid #3e3e3e;border-bottom:1px solid #3c3c3c"></div>
<svg style="left:1416px;top:799.5px;" width="14" height="9" viewBox="0 0 14 9"><path d="M0.500 4.500 C3 0.500 11 0.500 13.500 4.500 C11 8.500 3 8.500 0.500 4.500Z" fill="#c2c2c2"/><circle cx="7" cy="4.500" r="2.600" fill="#4a4a4a"/><circle cx="7" cy="4.500" r="1.100" fill="#c2c2c2"/></svg>
<div class="a" style="left:1442px;top:793.0px;width:32px;height:22px;background:repeating-conic-gradient(#fff 0 25%,#cfcfcf 0 50%) 0 0/8px 8px;border:1px solid #2a2a2a"></div>
<span class="t" style="left:1484.3px;top:800.74px;font-size:10px;color:#f0f0f0;-webkit-text-stroke:.22px;letter-spacing:-0.212px;">Meine Ebene Kopie</span>
<div class="a" style="left:1408px;top:819px;width:256px;height:29px;background:#535353;border-bottom:1px solid #3c3c3c"></div>
<div class="a" style="left:1408px;top:819px;width:31px;height:29px;background:#535353;border-right:1px solid #3e3e3e;border-bottom:1px solid #3c3c3c"></div>
<svg style="left:1416px;top:828.5px;" width="14" height="9" viewBox="0 0 14 9"><path d="M0.500 4.500 C3 0.500 11 0.500 13.500 4.500 C11 8.500 3 8.500 0.500 4.500Z" fill="#c2c2c2"/><circle cx="7" cy="4.500" r="2.600" fill="#4a4a4a"/><circle cx="7" cy="4.500" r="1.100" fill="#c2c2c2"/></svg>
<div class="a" style="left:1442px;top:822.0px;width:32px;height:22px;background:#fff;border:2px solid #8a3418;outline:1px solid #2a2a2a;outline-offset:-1px"></div>
<span class="t" style="left:1484.3px;top:829.74px;font-size:10px;color:#f0f0f0;-webkit-text-stroke:.22px;letter-spacing:-0.171px;">Vorlage Rückseite</span>
<div class="a" style="left:1408px;top:1029px;width:271px;height:20px;background:#535353;border-top:1px solid #383838"></div>
<svg style="left:1476px;top:1035px;" width="15" height="8" viewBox="0 0 15 8"><rect x="0.800" y="0.800" width="8" height="6.400" rx="3.200" fill="none" stroke="#8a8a8a" stroke-width="1.500"/><rect x="6.200" y="0.800" width="8" height="6.400" rx="3.200" fill="none" stroke="#8a8a8a" stroke-width="1.500"/></svg>
<span class="t" style="left:1504.5px;top:1032.65px;font-size:14px;color:#c8c8c8;font-family:'Liberation Serif',serif;font-style:italic;">fx</span>
<svg style="left:1517px;top:1043px;" width="4" height="3" viewBox="0 0 4 3"><path d="M0 0 H4 L2 2.500Z" fill="#c8c8c8"/></svg>
<svg style="left:1531px;top:1034px;" width="13" height="11" viewBox="0 0 13 11"><rect width="13" height="11" fill="#c8c8c8"/><circle cx="6.500" cy="5.500" r="2.600" fill="#555"/></svg>
<svg style="left:1558px;top:1033px;" width="15" height="13" viewBox="0 0 15 13"><circle cx="6" cy="6" r="5.300" fill="none" stroke="#c8c8c8" stroke-width="1.300"/><path d="M2.200 9.800 A5.300 5.300 0 0 1 9.800 2.200Z" fill="#c8c8c8"/><path d="M11 10.500 H15 L13 13Z" fill="#c8c8c8"/></svg>
<svg style="left:1584px;top:1034px;" width="14" height="11" viewBox="0 0 14 11"><path d="M0 0.500 H5 L6.500 2.500 H13.500 V11 H0Z" fill="#a8a8a8"/></svg>
<svg style="left:1612px;top:1034px;" width="12" height="11" viewBox="0 0 12 11"><path d="M0.500 0.500 H11.500 V10.500 H4.500 V4.500 H0.500Z" fill="#c8c8c8"/><path d="M0.500 5.500 H3.500 V9Z" fill="#c8c8c8"/></svg>
<svg style="left:1638.5px;top:1033px;" width="12" height="13" viewBox="0 0 12 13"><path d="M0 2.500 H12 M4 2 V0.500 H8 V2" fill="none" stroke="#c8c8c8" stroke-width="1"/><path d="M1.500 4 H10.500 V12.500 H1.500Z" fill="none" stroke="#c8c8c8"/><path d="M3.500 5 V11.500 M5.500 5 V11.500 M7.500 5 V11.500 M9.500 5 V11.500" stroke="#c8c8c8" stroke-width=".8"/></svg>
</body></html>
